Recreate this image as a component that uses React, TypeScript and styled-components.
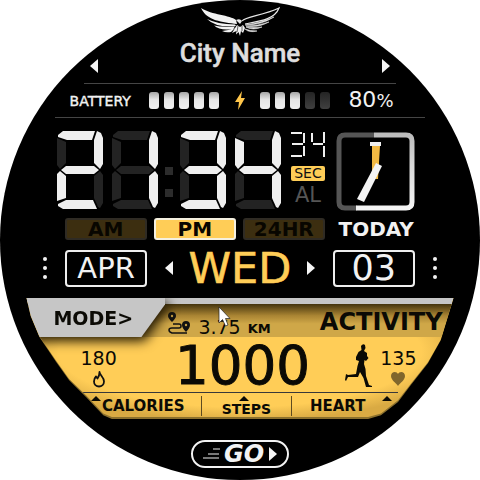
import React from "react";
import styled, { createGlobalStyle } from "styled-components";

const wide = '"DejaVu Sans", "Liberation Sans", sans-serif';
const gold = "#ffcd57";

const GlobalStyle = createGlobalStyle`
  * { box-sizing: border-box; }
  body { margin: 0; background: #fff; }
  button { appearance: none; margin: 0; padding: 0; border: 0; background: none; color: inherit; font: inherit; cursor: pointer; }
  svg { display: block; flex: none; }
`;

const Face = styled.main`
  position: relative;
  width: 100%;
  max-width: 480px;
  min-height: 480px;
  margin: 0 auto;
  padding-top: 6px;
  border-radius: 50%;
  overflow: hidden;
  background: #000;
  color: #f2f2f2;
  font-family: ${wide};
  display: flex;
  flex-direction: column;
  align-items: center;
`;

const CityRow = styled.header`
  width: 63%;
  height: 47px;
  display: flex;
  justify-content: space-between;
  align-items: flex-end;
  padding: 0 1px 10px 1px;
`;

const City = styled.h1`
  margin: 0;
  align-self: flex-start;
  font: 500 26px/34px Roboto, sans-serif;
  color: #dedede;
  -webkit-text-stroke: 0.5px #dedede;
`;

const Rule = styled.hr<{ $width: string }>`
  width: ${(p) => p.$width};
  height: 1px;
  margin: 0;
  border: 0;
  background: #454545;
`;

const BatteryRow = styled.section`
  width: 71%;
  height: 33px;
  display: flex;
  align-items: center;
  justify-content: space-between;
`;

const BatteryLabel = styled.span`
  width: 70px;
  font-size: 14px;
  -webkit-text-stroke: 0.4px #f2f2f2;
`;

const Percent = styled.span`
  width: 62px;
  font-size: 22px;
  line-height: 24px;
  white-space: nowrap;
  small { font-size: 18px; }
`;

const Cells = styled.div`
  display: flex;
  gap: 5px;
`;

const Cell = styled.i<{ $on: boolean }>`
  width: 10px;
  height: 17px;
  border-radius: 3px;
  background: ${(p) => (p.$on ? "linear-gradient(#a5a5a5, #e6e6e6 45%, #f0f0f0)" : "linear-gradient(#242424, #404040)")};
`;

const Meter = styled.div`
  width: 181px;
  margin-right: 8px;
  display: flex;
  align-items: center;
  justify-content: space-between;
`;

const TimeRow = styled.section`
  width: 358px;
  max-width: 75%;
  margin: 13px 9px 0 0;
  display: flex;
  justify-content: space-between;
  align-items: flex-start;
`;

const Digits = styled.div`
  display: flex;
  gap: 9px;
`;

const HoursMinutes = styled.div`
  display: flex;
  gap: 7px;
`;

const Colon = styled.div`
  padding-top: 36px;
  display: flex;
  flex-direction: column;
  gap: 14px;
  i { width: 8px; height: 8px; background: #2c2c2c; }
`;

const Seconds = styled.div`
  width: 36px;
  display: flex;
  flex-direction: column;
  align-items: center;
`;

const SmallDigits = styled.div`
  display: flex;
  gap: 4px;
`;

const SecBadge = styled.span`
  width: 34px;
  margin: 8px 0 5px;
  border-radius: 2px;
  background: ${gold};
  color: #111;
  font-size: 14px;
  line-height: 15px;
  text-align: center;
`;

const Alarm = styled.button`
  && { color: #555; font-size: 21px; line-height: 18px; }
`;

const ModeRow = styled.section`
  width: 73%;
  margin-top: 7px;
  display: flex;
  align-items: center;
  justify-content: space-between;
`;

const Periods = styled.div`
  display: flex;
  gap: 7px;
`;

const Period = styled.button<{ $active?: boolean }>`
  && {
    width: 82px;
    height: 22px;
    border: 2px solid ${(p) => (p.$active ? "#f5f0e0" : "#2f2b24")};
    border-radius: 3px;
    background: ${(p) => (p.$active ? gold : "#3c2e10")};
    color: #080600;
    font-size: 20px;
    font-weight: 700;
    line-height: 18px;
  }
`;

const Today = styled.span`
  width: 78px;
  font-size: 20px;
  line-height: 22px;
  font-weight: 700;
  display: flex;
  justify-content: center;
`;

const DateRow = styled.section`
  width: 82%;
  height: 38px;
  margin-top: 9px;
  display: flex;
  align-items: center;
  justify-content: space-between;
`;

const DateBox = styled.button`
  && {
    width: 82px;
    height: 37px;
    border: 2px solid #eee;
    border-radius: 4px;
    font-size: 29px;
    line-height: 33px;
  }
`;

const DayBox = styled(DateBox)`
  && { font-size: 35px; }
`;

const Weekday = styled.div`
  display: flex;
  align-items: center;
  justify-content: space-between;
  width: 150px;
`;

const WeekdayName = styled.strong`
  font-size: 43px;
  line-height: 38px;
  font-weight: 400;
  color: ${gold};
  -webkit-text-stroke: 0.6px ${gold};
`;

const Dots = styled.div`
  display: flex;
  flex-direction: column;
  gap: 5px;
  i { width: 4px; height: 4px; border-radius: 50%; background: #f2f2f2; }
`;

const outline =
  "polygon(0 0, 100% 0, 97% 35%, 94% 54%, 90% 72%, 87% 86%, 83% 97%, 80% 100%, 20% 100%, 18% 97%, 14% 82%, 10% 68%, 7% 53%, 3% 32%, 1% 15%)";

const PanelEdge = styled.section`
  width: 89%;
  margin-top: 11px;
  padding-bottom: 2px;
  background: #8b702d;
  clip-path: ${outline};
`;

const Panel = styled.div`
  background: radial-gradient(ellipse at 50% 45%, ${gold} 60%, #d9aa43 75%);
  color: #0b0a05;
  clip-path: ${outline};
`;

const PanelHead = styled.div`
  position: relative;
  display: flex;
  height: 39px;
  border-top: 6px solid #c6c6c6;
  background: linear-gradient(#44340d, #a98433 35%, #cfa748 60%, #cfa748);
`;

const ModeShade = styled.div`
  flex: none;
  margin-top: -6px;
  filter: drop-shadow(3px 4px 6px #1c1300);
`;

const ModeButton = styled.button`
  && {
    width: 139px;
    height: 39px;
    padding-left: 27px;
    background: #c6c6c6;
    clip-path: polygon(0 0, 100% 0, 100% 6px, 115px 100%, 0 100%);
    font-size: 19px;
    font-weight: 700;
    text-align: left;
  }
`;

const Distance = styled.div`
  display: flex;
  align-items: flex-end;
  gap: 7px;
  padding: 0 0 2px 3px;
  font-size: 19px;
  line-height: 15px;
  small { font-size: 13px; font-weight: 700; line-height: 13px; }
`;

const Activity = styled.h2`
  margin: 0 11px 0 auto;
  padding-top: 6px;
  font-size: 24px;
  line-height: 24px;
  font-weight: 700;
`;

const Stats = styled.div`
  height: 55px;
  padding: 0 8% 0 12%;
  display: flex;
  align-items: flex-start;
  justify-content: space-between;
`;

const Stat = styled.div`
  width: 42px;
  padding-top: 13px;
  display: flex;
  flex-direction: column;
  align-items: center;
  gap: 5px;
  font-size: 19px;
  line-height: 16px;
`;

const HeartStat = styled.div`
  display: flex;
  gap: 4px;
  & > svg { margin-top: 7px; }
`;

const Steps = styled.strong`
  font-size: 53px;
  line-height: 58px;
  font-weight: 400;
  margin-left: 20px;
  -webkit-text-stroke: 1px #0b0a05;
`;

const Tabs = styled.nav`
  margin: 0 13%;
  height: 25px;
  border-top: 1px solid #38383a;
  display: grid;
  grid-template-columns: 120px 90px 1fr;
`;

const Tab = styled.button<{ $low?: boolean; $split?: boolean }>`
  && {
    position: relative;
    height: 20px;
    margin-top: 3px;
    padding-top: ${(p) => (p.$low ? "6px" : "0")};
    border-right: ${(p) => (p.$split ? "1px solid #5e4b20" : "0")};
    font-size: ${(p) => (p.$low ? "14px" : "15px")};
    line-height: ${(p) => (p.$low ? "14px" : "18px")};
    font-weight: 700;
    text-align: ${(p) => (p.$low ? "center" : "left")};
  }
`;

const Marker = styled.i<{ $left: string }>`
  position: absolute;
  top: 0;
  left: ${(p) => p.$left};
  border: 5px solid transparent;
  border-top: 0;
  border-bottom-color: #0b0a05;
`;

const TabText = styled.span<{ $indent?: string }>`
  padding-left: ${(p) => p.$indent ?? "0"};
`;

const GoButton = styled.button`
  && {
    width: 98px;
    height: 28px;
    margin-top: 21px;
    border: 2px solid #f2f2f2;
    border-radius: 14px;
    display: flex;
    align-items: center;
    justify-content: center;
    gap: 4px;
    font-size: 24px;
    line-height: 24px;
    font-weight: 700;
    font-style: italic;
  }
`;

const Pointer = styled.svg`
  position: absolute;
  left: 218px;
  top: 306px;
`;

const SEGMENTS: Record<string, string> = {
  a: "1,4 6,0 38,0 35,9 10,9 1,6",
  b: "40,0 44,2 46,7 46,33 43,38 37,32 37,9",
  c: "43,40 46,44 46,72 43,77 41,76 37,67 37,45",
  d: "1,73 9,69 36,69 40,78 6,78 1,75",
  e: "0,43 3,40 9,45 9,67 0,70",
  f: "0,7 9,11 9,32 3,38 0,34",
  g: "4,39 9,35 37,35 42,39 37,43 9,43",
};
const LIT: Record<string, string> = { "1": "bc", "2": "abged", "3": "abgcd", "4": "fgbc" };

const Digit = ({ value }: { value: string }) => (
  <svg width="46" height="78" viewBox="0 0 46 78" role="img" aria-label={value}>
    {Object.entries(SEGMENTS).map(([key, points]) => (
      <polygon key={key} points={points} fill={LIT[value].includes(key) ? "#efefef" : "#232323"} />
    ))}
  </svg>
);

const SmallDigit = ({ value }: { value: string }) => (
  <svg width="16" height="27" viewBox="0 0 16 27" role="img" aria-label={value} stroke="#efefef" strokeWidth="2">
    {value === "3" ? (
      <path d="M1 2H12M2 13H13M1 25H12M14 2V12M14 15V25" />
    ) : (
      <path d="M2 2V11M3 13H13M14 1V12M14 15V26" />
    )}
  </svg>
);

const Arrow = ({ flip }: { flip?: boolean }) => (
  <svg width="9" height="14" viewBox="0 0 9 14" aria-hidden="true">
    <path d={flip ? "M8 0v14L0 7z" : "M1 0v14L9 7z"} fill="#f5f5f5" />
  </svg>
);

const Wings = () => (
  <svg width="80" height="30" viewBox="0 0 80 30" aria-hidden="true">
    <g fill="#f2f2f2">
      <path d="M1 2C12 9 30 9 36 14L37 18C22 16 7 15 1 2Z" />
      <path d="M7 13Q17 18 35 18.500L36 20Q16 22 7 13Z" />
      <path d="M14 19.500Q22 21.500 35 20.500L33 23Q20 25 14 19.500Z" />
      <path d="M22 25Q28 24.500 35 22L31 26Q26 27 22 25Z" />
      <path d="M37 19L40 21L43 19L45 22L43 27L41 25L40 30L38.500 26L36 28.500L36.500 25L32 27Z" />
    </g>
    <path d="M42 15C46 10 62 10 79 2C75 13 61 15 45 18" fill="none" stroke="#e6e6e6" strokeWidth="1.200" />
    <g fill="#e6e6e6">
      <path d="M74 11Q62 19 45 19Q63 16 74 11ZM69 16Q58 22 46 20Q58 20 69 16ZM62 21Q53 25 46 21Q54 22 62 21ZM57 25Q49 27 45 23Q50 25 57 25Z" stroke="#e6e6e6" strokeWidth=".6" />
      <path d="M36 14Q40 12 42 15L40 18Z" />
    </g>
    <path d="M38 20l-1 6M42 20v5" stroke="#000" strokeWidth=".6" />
  </svg>
);

const Clock = () => (
  <svg width="79" height="80" viewBox="0 0 79 80" role="img" aria-label="Analog clock">
    <defs>
      <linearGradient id="rim" x1="0" y1="0" x2="0" y2="1">
        <stop offset="0" stopColor="#bdbdbd" />
        <stop offset=".4" stopColor="#d8d8d8" />
        <stop offset="1" stopColor="#f4f4f4" />
      </linearGradient>
    </defs>
    <g fill="none" strokeWidth="5">
      <path d="M38 4H9Q3 4 3 10V71Q3 77 9 77H21" stroke="#555" />
      <path d="M38 4H70Q76 4 76 10V71Q76 77 70 77H20" stroke="url(#rim)" />
    </g>
    <path d="M36 15H44L42 48H36Z" fill="#f2b943" />
    <path d="M34 11H45V15H34Z" fill="#eee" />
    <path d="M40 32L46 35L28 71L21 68Z" fill="#f4f4f4" />
  </svg>
);

const Route = () => (
  <svg width="23" height="24" viewBox="0 0 23 24" aria-hidden="true">
    <path d="M4 1A4 4 0 0 1 8 5Q8 7 4 11Q0 7 0 5A4 4 0 0 1 4 1ZM18 10A4 4 0 0 1 22 14Q22 17 18 21Q14 17 14 14A4 4 0 0 1 18 10Z" fill="#111" />
    <circle cx="4" cy="5" r="1.200" fill="#c59d43" />
    <circle cx="18" cy="14" r="1.200" fill="#c59d43" />
    <path d="M4 13H10Q12 13 12 15T10 17H3Q0 17 0 19T3 22H18" transform="translate(1)" fill="none" stroke="#111" strokeWidth="1.500" />
  </svg>
);

const Flame = () => (
  <svg width="14" height="17" viewBox="0 0 14 17" aria-hidden="true">
    <path d="M7.500 1C7.500 4 12 6 12 10.500A5 5 0 0 1 2 10.500C2 8 3 6.500 4 5.500L5.500 7.500C7 5.500 7.500 3 7.500 1Z" fill="none" stroke="#111" strokeWidth="1.800" strokeLinejoin="round" />
  </svg>
);

const HeartIcon = () => (
  <svg width="14" height="15" viewBox="0 0 14 15" aria-hidden="true">
    <path d="M7 3C6 0 0 0 0 5C0 9 5 12 7 15C9 12 14 9 14 5C14 0 8 0 7 3Z" fill="#80662c" />
  </svg>
);

const Runner = () => (
  <svg width="28" height="44" viewBox="0 0 28 44" aria-hidden="true">
    <path d="M16 2Q18-1 20 1L20.500 4L19 7L22 9L22 12L23.500 14L21 17L19.500 16L19 20L20.500 25L21 32L24 41L27 42L27 43L21 43L18.500 34L15 28L13 33L3 33L1 37L0 36L1 30L3 31L11 30L12.500 22L14 17L11 16L11 13L13.500 8L16.500 6Z" fill="#0b0a05" />
  </svg>
);

export default function App() {
  return (
    <>
      <GlobalStyle />
      <Face>
        <Wings />
        <CityRow>
          <button aria-label="Previous city"><Arrow flip /></button>
          <City>City Name</City>
          <button aria-label="Next city"><Arrow /></button>
        </CityRow>
        <Rule $width="65%" />
        <BatteryRow>
          <BatteryLabel>BATTERY</BatteryLabel>
          <Meter>
            <Cells>{[0, 1, 2, 3, 4].map((n) => <Cell key={n} $on />)}</Cells>
            <svg width="12" height="19" viewBox="0 0 12 19" aria-hidden="true">
              <path d="M8 0L1 11H5L4 19L11 7H7Z" fill="#ffc64b" />
            </svg>
            <Cells>{[0, 1, 2, 3, 4].map((n) => <Cell key={n} $on={n < 3} />)}</Cells>
          </Meter>
          <Percent>80<small>%</small></Percent>
        </BatteryRow>
        <Rule $width="77%" />

        <TimeRow>
          <HoursMinutes>
            <Digits><Digit value="2" /><Digit value="1" /></Digits>
            <Colon><i /><i /></Colon>
            <Digits><Digit value="3" /><Digit value="4" /></Digits>
          </HoursMinutes>
          <Seconds>
            <SmallDigits><SmallDigit value="3" /><SmallDigit value="4" /></SmallDigits>
            <SecBadge>SEC</SecBadge>
            <Alarm>AL</Alarm>
          </Seconds>
          <Clock />
        </TimeRow>

        <ModeRow>
          <Periods>
            <Period>AM</Period>
            <Period $active>PM</Period>
            <Period>24HR</Period>
          </Periods>
          <Today>TODAY</Today>
        </ModeRow>

        <DateRow>
          <Dots><i /><i /><i /></Dots>
          <DateBox>APR</DateBox>
          <Weekday>
            <button aria-label="Previous day"><Arrow flip /></button>
            <WeekdayName>WED</WeekdayName>
            <button aria-label="Next day"><Arrow /></button>
          </Weekday>
          <DayBox>03</DayBox>
          <Dots><i /><i /><i /></Dots>
        </DateRow>

        <PanelEdge>
          <Panel>
            <PanelHead>
              <ModeShade><ModeButton>MODE&gt;</ModeButton></ModeShade>
              <Distance><Route /><span>3.75</span><small>KM</small></Distance>
              <Activity>ACTIVITY</Activity>
            </PanelHead>
            <Stats>
              <Stat>180<Flame /></Stat>
              <Steps>1000</Steps>
              <HeartStat><Runner /><Stat>135<HeartIcon /></Stat></HeartStat>
            </Stats>
            <Tabs>
              <Tab $split><Marker $left="9px" /><TabText $indent="20px">CALORIES</TabText></Tab>
              <Tab $split $low><Marker $left="37px" /><TabText>STEPS</TabText></Tab>
              <Tab><Marker $left="90px" /><TabText $indent="18px">HEART</TabText></Tab>
            </Tabs>
          </Panel>
        </PanelEdge>

        <GoButton>
          <svg width="17" height="12" viewBox="0 0 17 12" aria-hidden="true">
            <path d="M10 1H17M5 6H16M0 10H16" stroke="#eee" />
          </svg>
          <span>GO</span>
          <Arrow />
        </GoButton>
        <Pointer width="13" height="22" viewBox="0 0 13 22" aria-hidden="true">
          <path d="M1 1V17L4.500 13.500L7.500 20L10 19L7.500 12.500H12Z" fill="#fff" stroke="#222" strokeWidth=".7" />
        </Pointer>
      </Face>
    </>
  );
}
